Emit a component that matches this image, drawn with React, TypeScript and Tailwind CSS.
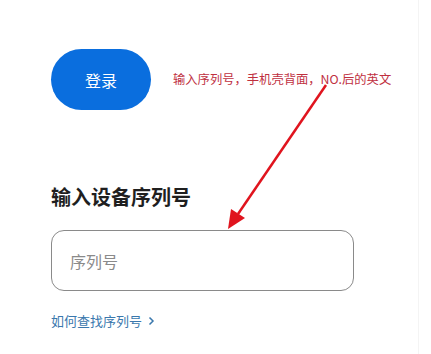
import React from "react";

const font = { fontFamily: '"Noto Sans CJK SC", "Noto Sans", sans-serif' };

export default function App() {
  return (
    <div className="relative w-[431px] h-[354px] bg-white overflow-hidden" style={font}>
      <div className="h-full w-[419px] border-r border-[#f4f4f4] pl-[51px] pt-[49px]">
        {/* login row */}
        <div className="flex items-center">
          <button className="w-[100px] h-[61px] rounded-full bg-[#0a6ede] text-white text-[16px] flex items-center justify-center">
            登录
          </button>
          <span className="ml-[22px] text-[12.3px] text-[#c0303f] leading-none">
            输入序列号，手机壳背面，NO.后的英文
          </span>
        </div>

        {/* serial */}
        <h2 className="mt-[73px] text-[20px] font-bold text-[#1f1f1f] leading-[28px]">
          输入设备序列号
        </h2>
        <div className="mt-[19px] w-[303px] h-[61px] rounded-[13px] border border-[#8a8a8a] flex items-center px-[18px]">
          <span className="text-[16px] text-[#8a8a8a]">序列号</span>
        </div>
        <a className="mt-[20px] flex items-center gap-[6px] text-[13px] text-[#3a78ad]">
          如何查找序列号
          <svg width="7" height="10" viewBox="0 0 7 10" fill="none">
            <path d="M1.5 1.5 L5 5 L1.5 8.5" stroke="#3a78ad" strokeWidth="1.5" />
          </svg>
        </a>
      </div>

      {/* annotation arrow */}
      <svg className="absolute left-0 top-0 pointer-events-none" width="431" height="354">
        <line x1="326" y1="85" x2="238" y2="214" stroke="#e0141e" strokeWidth="2.5" />
        <polygon points="228,229 245,218 231,209" fill="#e0141e" />
      </svg>
    </div>
  );
}
